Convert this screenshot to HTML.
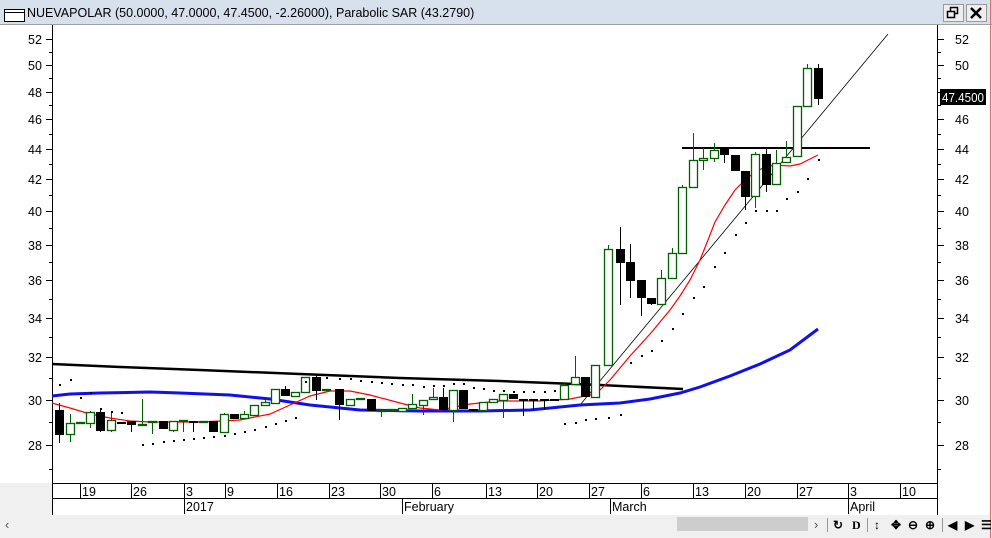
<!DOCTYPE html>
<html><head><meta charset="utf-8"><style>
body{margin:0;width:992px;height:538px;overflow:hidden;background:#fff;font-family:"Liberation Sans",Arial,sans-serif;}
svg{display:block}
</style></head><body>
<svg id="s" width="992" height="538" viewBox="0 0 992 538" xmlns="http://www.w3.org/2000/svg" font-family="Liberation Sans, Arial, sans-serif">
<rect width="992" height="538" fill="#fff"/>
<rect x="0" y="0" width="992" height="24" fill="#d7e1ed"/>
<line x1="0" y1="24.5" x2="992" y2="24.5" stroke="#a0a0a0"/>
<rect x="4.5" y="9.5" width="20" height="12" fill="#fff" stroke="#000"/>
<line x1="4" y1="12.5" x2="25" y2="12.5" stroke="#000"/>
<text x="27" y="17" font-size="12.5" fill="#000">NUEVAPOLAR (50.0000, 47.0000, 47.4500, -2.26000), Parabolic SAR (43.2790)</text>
<rect x="943.5" y="4.5" width="20" height="17" fill="#eee" stroke="#999"/>
<rect x="950.5" y="7.5" width="7" height="6" fill="none" stroke="#000" stroke-width="1.5"/>
<rect x="947.5" y="11.5" width="7" height="6" fill="#eee" stroke="#000" stroke-width="1.5"/>
<rect x="966.5" y="4.5" width="20" height="17" fill="#eee" stroke="#999"/>
<path d="M971 8 L981 18 M981 8 L971 18" stroke="#000" stroke-width="2.5"/>
<line x1="990.5" y1="0" x2="990.5" y2="538" stroke="#e07070"/>
<line x1="52.5" y1="25" x2="52.5" y2="483" stroke="#000"/>
<line x1="937.5" y1="25" x2="937.5" y2="483" stroke="#000"/>
<g id="ticks" stroke="#000"></g>
<g font-size="12.5" fill="#000" id="labels"></g>
<rect x="940" y="89" width="46" height="16" fill="#000"/>
<text x="942" y="102" font-size="12.5" fill="#fff" textLength="42" lengthAdjust="spacingAndGlyphs">47.4500</text>
<rect x="0" y="483" width="52" height="55" fill="#f0f0f0"/>
<rect x="937" y="483" width="53" height="33" fill="#fff"/>
<rect x="0" y="515" width="990" height="23" fill="#f0f0f0"/>
<line x1="52" y1="483.5" x2="937" y2="483.5" stroke="#000"/>
<line x1="52" y1="498.5" x2="937" y2="498.5" stroke="#000"/>
<line x1="52.5" y1="483" x2="52.5" y2="515" stroke="#000"/>
<line x1="937.5" y1="483" x2="937.5" y2="515" stroke="#000"/>
<g id="dates" stroke="#000" font-size="12.5"></g>
<rect x="677" y="517" width="131" height="14" fill="#cdcdcd"/>
<text x="5" y="529" font-size="13" fill="#555">‹</text>
<text x="814" y="529" font-size="13" fill="#555">›</text>
<g font-size="12" fill="#000" font-weight="bold">
<text x="833" y="529">↻</text><text x="852" y="529" font-family="Liberation Serif">D</text>
<text x="874" y="529">↕</text><text x="891" y="529">✥</text><text x="908" y="529">⊖</text><text x="925" y="529">⊕</text>
<text x="948" y="529">◀</text><text x="965" y="529">▶</text><text x="981" y="529">☰</text>
</g>
<g stroke="#999"><line x1="827.5" y1="518" x2="827.5" y2="532"/><line x1="867.5" y1="518" x2="867.5" y2="532"/><line x1="942.5" y1="518" x2="942.5" y2="532"/></g>
<polyline fill="none" stroke="#000" stroke-width="2.5" points="52,364 120,367 200,370 300,374 400,378 500,381 600,385 683,389"/>
<line x1="682" y1="148" x2="870" y2="148" stroke="#000" stroke-width="2"/>
<line x1="580" y1="405" x2="888" y2="34" stroke="#000" stroke-width="0.8"/>
<polyline fill="none" stroke="#1010ee" stroke-width="3" points="52,396 70,394 100,393 150,392 180,393 230,395 270,399 310,405 360,410 420,411 480,411 530,410 580,405 620,403 650,399 680,393 700,387 730,376 760,364 790,350 818,329"/>
<polyline fill="none" stroke="#f00" stroke-width="1.2" points="52,403 70,408 90,414 110,418 130,421 150,422 200,422 240,420 270,414 290,405 310,396 330,391 350,391 370,395 400,403 420,408 440,410 470,404 500,401 540,401 570,399 590,395 600,390 610,380 620,368 630,356 640,345 650,334 660,322 670,310 680,296 690,280 700,260 708,240 715,222 725,205 735,190 745,180 755,172 765,167 775,165 790,166 800,164 810,159 818,155"/>
<g id="c"></g>
<g id="d" fill="#000"></g>
</svg>
<script>
const NS="http://www.w3.org/2000/svg";
function el(p,t,a,txt){const e=document.createElementNS(NS,t);for(const k in a)e.setAttribute(k,a[k]);if(txt!==undefined)e.textContent=txt;document.getElementById(p).appendChild(e);}
function y(p){return 39+656*(Math.log(52)-Math.log(p));}
[52,50,48,46,44,42,40,38,36,34,32,30,28].forEach(p=>{const yy=Math.round(y(p))+0.5;
el('ticks','line',{x1:46,y1:yy,x2:52,y2:yy});el('ticks','line',{x1:937,y1:yy,x2:944,y2:yy});
el('labels','text',{x:28,y:yy+4.5},String(p));if(p!=48)el('labels','text',{x:955,y:yy+4.5},String(p));});
for(let p=27;p<52;p++){if(p%2){const yy=Math.round(y(p))+0.5;el('ticks','line',{x1:49,y1:yy,x2:52,y2:yy});el('ticks','line',{x1:937,y1:yy,x2:941,y2:yy});}}
[[80,'19'],[131,'26'],[184,'3'],[225,'9'],[277,'16'],[329,'23'],[380,'30'],[432,'6'],[486,'13'],[537,'20'],[589,'27'],[641,'6'],[693,'13'],[745,'20'],[797,'27'],[848,'3'],[900,'10']].forEach(([x,t])=>{el('dates','line',{x1:x+.5,y1:483,x2:x+.5,y2:498});el('dates','text',{x:x+2,y:496,stroke:'none'},t);});
[[184,'2017'],[402,'February'],[610,'March'],[848,'April']].forEach(([x,t])=>{el('dates','line',{x1:x+.5,y1:498,x2:x+.5,y2:514});el('dates','text',{x:x+2,y:511,stroke:'none'},t);});
const C=[[59,'b',410,434,403,443],[70,'g',423,434,414,442],[80,'g',422,423,422,423],[90,'g',412,423,411,428],[100,'b',412,430,410,432],[111,'g',420,430,411,432],[121,'b',422,423,422,423],[131,'b',421,424,421,432],[142,'g',424,425,399,425],[152,'g',421,422,421,434],[163,'b',421,428,421,428],[173,'g',421,430,421,432],[183,'g',420,421,420,432],[193,'b',421,422,421,432],[203,'g',421,422,421,422],[213,'b',421,431,421,431],[224,'g',414,432,413,432],[234,'b',414,418,414,418],[244,'g',414,418,411,418],[254,'g',405,415,405,415],[265,'g',402,405,399,405],[275,'g',389,403,389,403],[285,'b',389,395,386,395],[295,'g',392,396,392,396],[305,'g',377,392,377,392],[316,'b',377,390,375,400],[326,'g',389,390,389,390],[339,'b',389,404,389,420],[350,'g',399,405,399,405],[360,'g',398,399,398,399],[371,'b',399,410,399,410],[381,'g',410,411,410,417],[391,'g',409,410,409,410],[402,'g',408,411,408,411],[412,'g',404,408,394,408],[423,'g',400,405,400,415],[433,'g',397,399,388,399],[443,'b',397,409,388,409],[453,'g',390,410,390,422],[463,'b',390,408,390,408],[473,'b',409,410,409,410],[483,'g',402,410,402,410],[493,'g',399,402,399,402],[503,'g',394,400,394,418],[513,'b',394,398,394,398],[523,'b',399,400,399,416],[533,'b',399,400,399,410],[544,'b',399,400,399,409],[554,'b',399,400,399,400],[564,'g',385,399,382,399],[575,'g',377,384,356,384],[585,'b',377,396,377,396],[595,'g',365,397,365,397],[608,'g',249,365,245,365],[620,'b',249,262,227,305],[630,'b',262,280,244,298],[641,'b',280,297,280,316],[651,'b',298,303,298,305],[661,'g',278,304,270,304],[672,'g',253,278,248,278],[682,'g',187,253,185,253],[693,'g',160,187,133,187],[703,'g',158,160,148,170],[714,'g',150,158,143,162],[724,'b',149,154,149,163],[735,'b',155,170,155,170],[745,'b',171,196,171,210],[755,'g',154,196,152,208],[766,'b',154,184,147,192],[776,'g',163,184,150,184],[786,'g',157,162,141,162],[797,'g',106,156,106,136],[807,'g',68,106,64,106],[818,'b',68,98,64,105]];
C.forEach(([x,t,bt,bb,wt,wb])=>{const col=t=='g'?'#006000':'#000';
el('c','line',{x1:x+.5,y1:wt,x2:x+.5,y2:Math.max(wb,bb),stroke:col});
const h=Math.max(bb-bt,1);
if(t=='g')el('c','rect',{x:x-3.5,y:bt+.5,width:8,height:h,fill:'#fff',stroke:col,'stroke-width':1.3});
else el('c','rect',{x:x-4,y:bt,width:9,height:h+1,fill:'#000'});});
const D=[[59,384],[70,379],[80,397],[90,392],[100,408],[111,411],[121,412],[131,421],[142,444],[152,443],[163,441],[173,440],[183,439],[193,438],[203,437],[213,436],[224,435],[234,433],[244,431],[254,429],[265,426],[275,423],[285,420],[295,417],[305,381],[316,379],[326,377],[339,378],[350,378],[360,380],[371,381],[381,382],[391,383],[402,384],[412,384],[423,386],[433,385],[443,385],[453,383],[463,383],[473,387],[483,388],[493,390],[503,390],[513,391],[523,391],[533,391],[544,391],[554,390],[564,423],[575,422],[585,419],[595,418],[608,417],[620,414],[630,362],[641,355],[651,350],[661,340],[672,328],[682,313],[693,297],[703,286],[714,266],[724,252],[735,234],[745,222],[755,210],[766,210],[776,210],[786,198],[797,191],[807,178],[818,159]];
D.forEach(([x,yy])=>el('d','rect',{x:x,y:yy,width:2,height:2}));
</script>
</body></html>
